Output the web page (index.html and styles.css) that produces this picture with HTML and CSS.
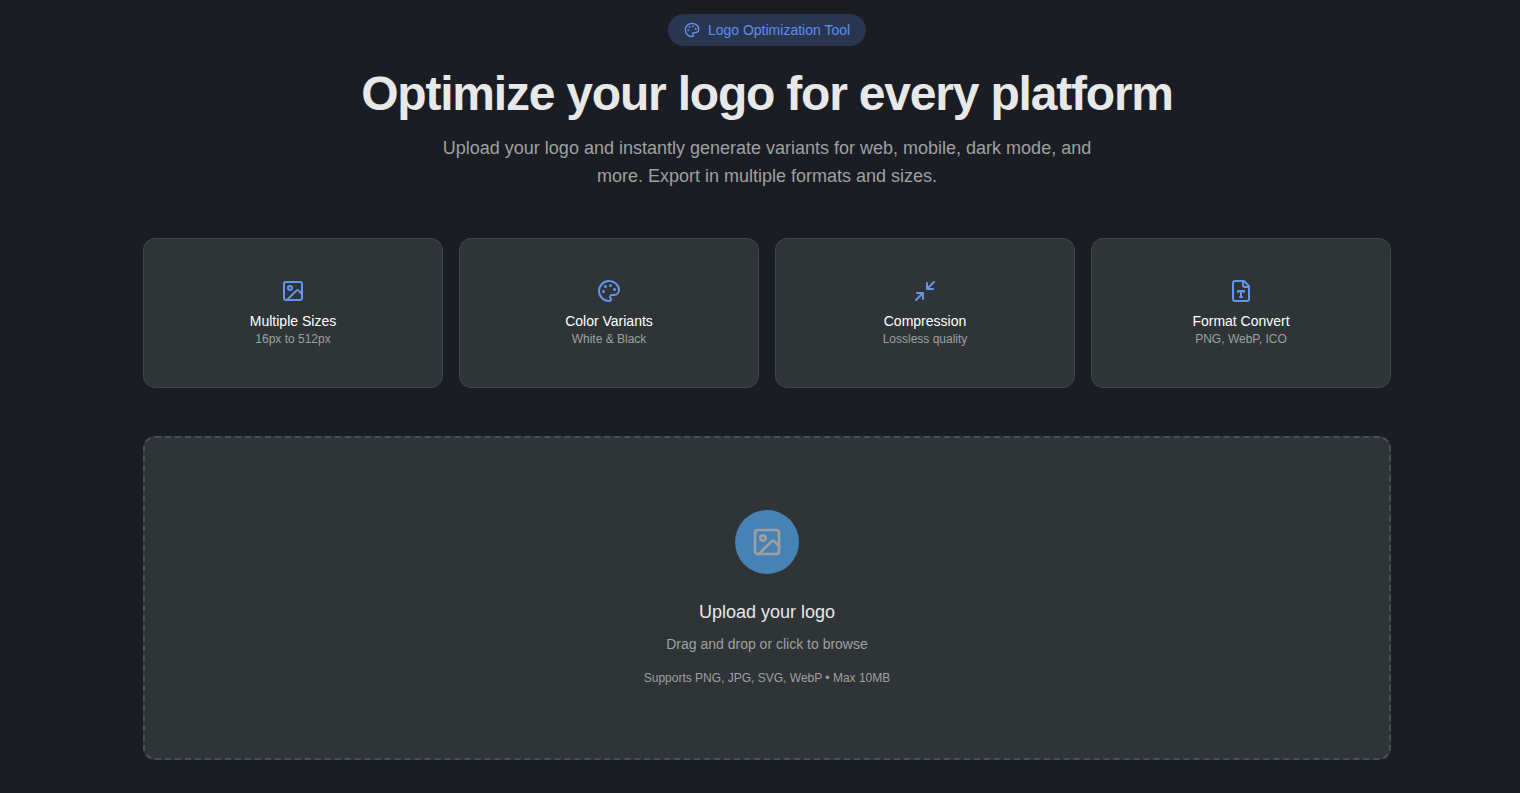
FILE: index.html
```html
<!DOCTYPE html>
<html>
<head>
    <title>Logo Optimization Tool</title>
    <link rel="stylesheet" href="styles.css">
</head>
<body>
    <main class="page">
        <section class="hero">
            <div class="badge">
                <svg class="icon icon-16" viewBox="0 0 24 24"><path d="M12 22a1 1 0 0 1 0-20 10 9 0 0 1 10 9 5 5 0 0 1-5 5h-2.25a1.75 1.75 0 0 0-1.4 2.8l.3.4a1.75 1.75 0 0 1-1.4 2.8z"/><circle class="dot" cx="13.5" cy="6.5" r=".5"/><circle class="dot" cx="17.5" cy="10.5" r=".5"/><circle class="dot" cx="6.5" cy="12.5" r=".5"/><circle class="dot" cx="8.5" cy="7.5" r=".5"/></svg>
                <span>Logo Optimization Tool</span>
            </div>
            <h1>Optimize your logo for every platform</h1>
            <p class="lead">Upload your logo and instantly generate variants for web, mobile, dark mode, and more. Export in multiple formats and sizes.</p>
        </section>

        <section class="features">
            <div class="feature">
                <svg class="icon" viewBox="0 0 24 24"><rect x="3" y="3" width="18" height="18" rx="2" ry="2"/><circle cx="9" cy="9" r="2"/><path d="m21 15-3.086-3.086a2 2 0 0 0-2.828 0L6 21"/></svg>
                <div class="feature-title">Multiple Sizes</div>
                <div class="feature-sub">16px to 512px</div>
            </div>
            <div class="feature">
                <svg class="icon" viewBox="0 0 24 24"><path d="M12 22a1 1 0 0 1 0-20 10 9 0 0 1 10 9 5 5 0 0 1-5 5h-2.25a1.75 1.75 0 0 0-1.4 2.8l.3.4a1.75 1.75 0 0 1-1.4 2.8z"/><circle class="dot" cx="13.5" cy="6.5" r=".5"/><circle class="dot" cx="17.5" cy="10.5" r=".5"/><circle class="dot" cx="6.5" cy="12.5" r=".5"/><circle class="dot" cx="8.5" cy="7.5" r=".5"/></svg>
                <div class="feature-title">Color Variants</div>
                <div class="feature-sub">White &amp; Black</div>
            </div>
            <div class="feature">
                <svg class="icon" viewBox="0 0 24 24"><path d="m14 10 7-7"/><path d="M20 10h-6V4"/><path d="m3 21 7-7"/><path d="M4 14h6v6"/></svg>
                <div class="feature-title">Compression</div>
                <div class="feature-sub">Lossless quality</div>
            </div>
            <div class="feature">
                <svg class="icon" viewBox="0 0 24 24"><path d="M15 2H6a2 2 0 0 0-2 2v16a2 2 0 0 0 2 2h12a2 2 0 0 0 2-2V7Z"/><path d="M14 2v4a2 2 0 0 0 2 2h4"/><path d="M9 13v-1h6v1"/><path d="M12 12v6"/><path d="M11 18h2"/></svg>
                <div class="feature-title">Format Convert</div>
                <div class="feature-sub">PNG, WebP, ICO</div>
            </div>
        </section>

        <section class="upload">
            <div class="upload-circle">
                <svg class="icon icon-32" viewBox="0 0 24 24"><rect x="3" y="3" width="18" height="18" rx="2" ry="2"/><circle cx="9" cy="9" r="2"/><path d="m21 15-3.086-3.086a2 2 0 0 0-2.828 0L6 21"/></svg>
            </div>
            <h3>Upload your logo</h3>
            <p class="upload-sub">Drag and drop or click to browse</p>
            <p class="upload-note">Supports PNG, JPG, SVG, WebP • Max 10MB</p>
        </section>
    </main>
</body>
</html>
```

FILE: styles.css
```css
body {
    background-color: #1a1d23;
    color: #e8e8e8;
    font-family: "Liberation Sans", Arial, sans-serif;
    margin: 0;
    padding: 14px 0 33px 14px;
}

.page {
    width: 1248px;
    margin: 0 auto;
}

.icon {
    display: block;
    width: 24px;
    height: 24px;
    fill: none;
    stroke: #6495ed;
    stroke-width: 2;
    stroke-linecap: round;
    stroke-linejoin: round;
}

.icon-16 {
    width: 16px;
    height: 16px;
}

.icon-32 {
    width: 32px;
    height: 32px;
    stroke: #a0a0a0;
}

.dot {
    fill: #6495ed;
}

/* Hero */
.hero {
    display: flex;
    flex-direction: column;
    align-items: center;
    text-align: center;
    margin-bottom: 48px;
}

.badge {
    display: flex;
    align-items: center;
    gap: 8px;
    height: 32px;
    padding: 0 16px;
    box-sizing: border-box;
    border-radius: 16px;
    background-color: #2a3650;
    color: #5c8fef;
    font-size: 14px;
    margin-bottom: 24px;
}

h1 {
    font-size: 48px;
    line-height: 48px;
    font-weight: bold;
    letter-spacing: -1.2px;
    color: #e8e8e8;
    margin: 0 0 16px;
}

.lead {
    width: 672px;
    font-size: 18px;
    line-height: 28px;
    color: #a0a0a0;
    margin: 0;
}

/* Feature cards */
.features {
    display: grid;
    grid-template-columns: repeat(4, 1fr);
    gap: 16px;
    margin-bottom: 48px;
}

.feature {
    display: flex;
    flex-direction: column;
    align-items: center;
    padding: 40px 16px;
    background-color: #2f3437;
    border: 1px solid #3f4447;
    border-radius: 12px;
}

.feature-title {
    font-size: 14px;
    line-height: 20px;
    color: #ffffff;
    margin-top: 8px;
}

.feature-sub {
    font-size: 12px;
    line-height: 16px;
    color: #a0a0a0;
}

/* Upload box */
.upload {
    display: flex;
    flex-direction: column;
    align-items: center;
    padding: 72px 0;
    background-color: #2f3437;
    border: 2px dashed #4a4f52;
    border-radius: 12px;
}

.upload-circle {
    display: flex;
    align-items: center;
    justify-content: center;
    width: 64px;
    height: 64px;
    border-radius: 50%;
    background-color: #4682b4;
    margin-bottom: 24px;
}

.upload h3 {
    font-size: 18px;
    line-height: 28px;
    font-weight: 500;
    color: #e8e8e8;
    margin: 0 0 8px;
}

.upload-sub {
    font-size: 14px;
    line-height: 20px;
    color: #a0a0a0;
    margin: 0 0 16px;
}

.upload-note {
    font-size: 12px;
    line-height: 16px;
    color: #a0a0a0;
    margin: 0;
}
```
